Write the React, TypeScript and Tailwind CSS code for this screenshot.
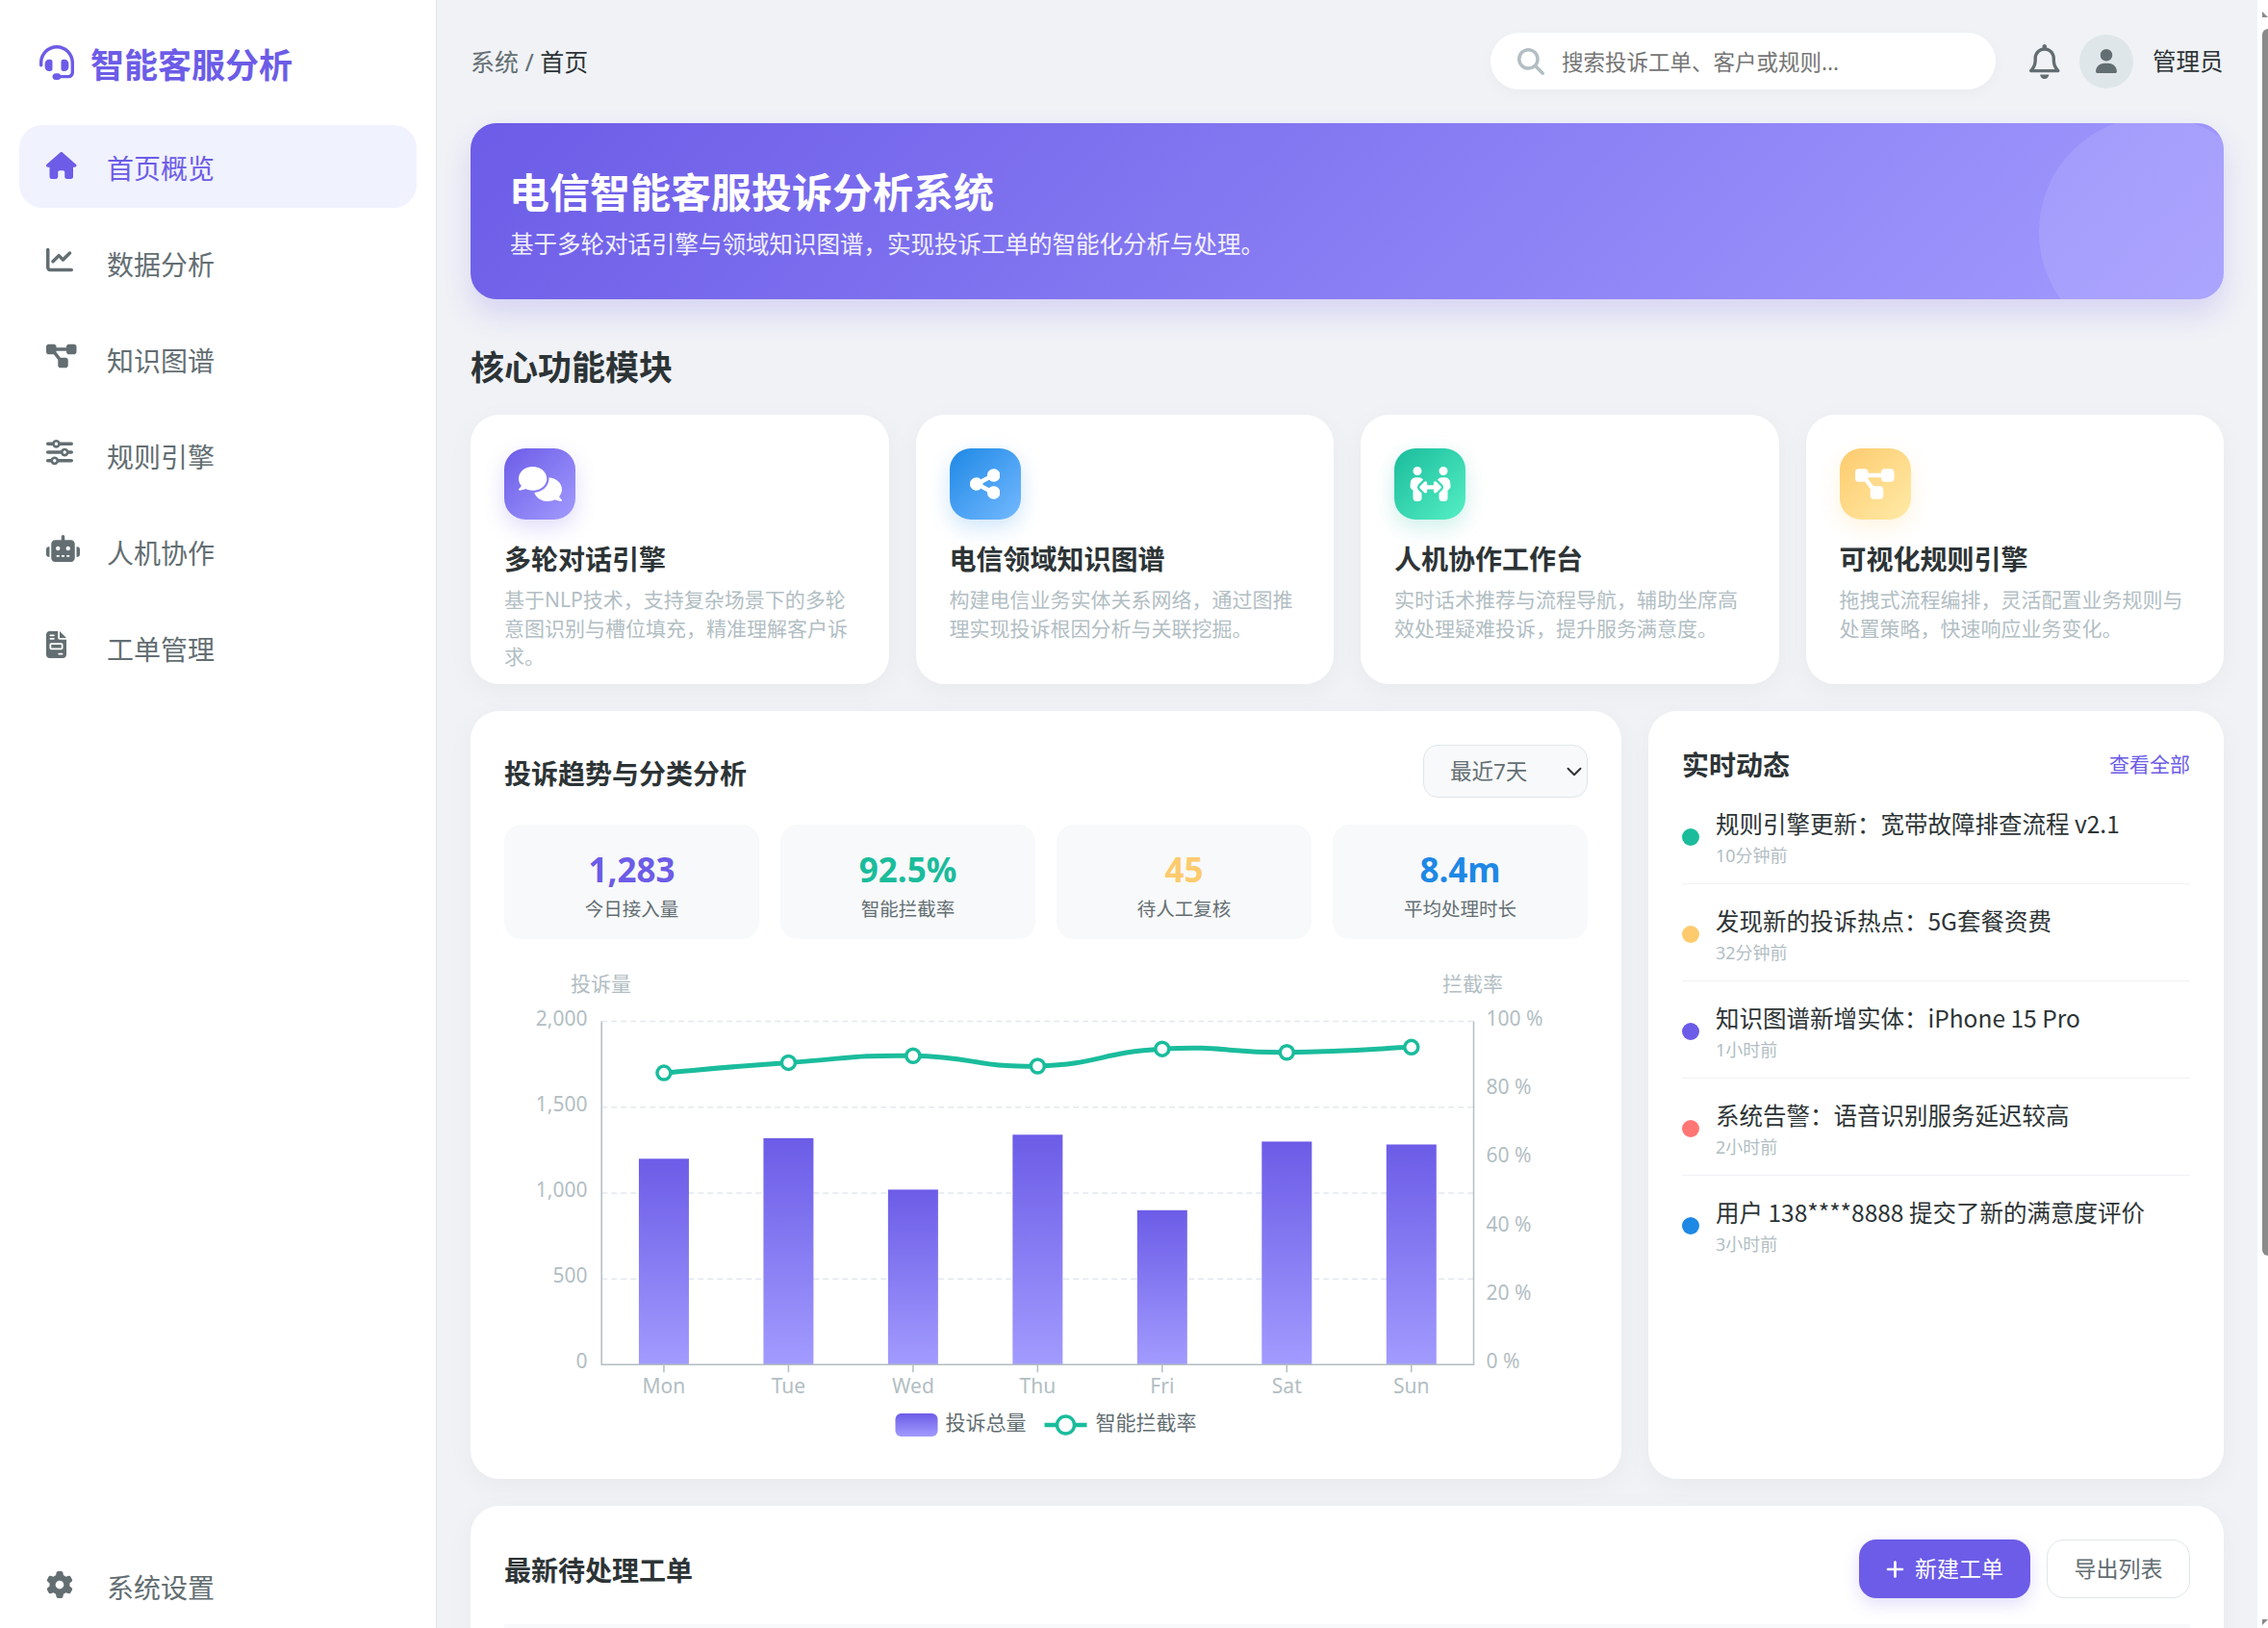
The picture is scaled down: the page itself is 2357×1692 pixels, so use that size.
import type { ReactNode } from 'react';
import { ChevronDown } from 'lucide-react';
import {
  FaChartLine,
  FaComments,
  FaDiagramProject,
  FaFileInvoice,
  FaGear,
  FaHeadset,
  FaHouse,
  FaMagnifyingGlass,
  FaPeopleArrows,
  FaPlus,
  FaRegBell,
  FaRobot,
  FaShareNodes,
  FaSliders,
  FaUser,
} from 'react-icons/fa6';

const navItems: { label: string; icon: ReactNode }[] = [
  { label: '数据分析', icon: <FaChartLine className="h-[28px] w-[28px]" /> },
  { label: '知识图谱', icon: <FaDiagramProject className="h-[28px] w-[31.5px]" /> },
  { label: '规则引擎', icon: <FaSliders className="h-[28px] w-[28px]" /> },
  { label: '人机协作', icon: <FaRobot className="h-[28px] w-[35px]" /> },
  { label: '工单管理', icon: <FaFileInvoice className="h-[28px] w-[21px]" /> },
];

const modules = [
  {
    title: '多轮对话引擎',
    desc: '基于NLP技术，支持复杂场景下的多轮意图识别与槽位填充，精准理解客户诉求。',
    icon: <FaComments className="h-[36px] w-[45px]" />,
    tone: 'bg-[linear-gradient(135deg,#6c5ce7,#a29bfe)] shadow-[0_8px_22px_rgba(108,92,231,0.22)]',
  },
  {
    title: '电信领域知识图谱',
    desc: '构建电信业务实体关系网络，通过图推理实现投诉根因分析与关联挖掘。',
    icon: <FaShareNodes className="h-[36px] w-[31.5px]" />,
    tone: 'bg-[linear-gradient(135deg,#1e88e5,#74b9ff)] shadow-[0_8px_22px_rgba(30,136,229,0.22)]',
  },
  {
    title: '人机协作工作台',
    desc: '实时话术推荐与流程导航，辅助坐席高效处理疑难投诉，提升服务满意度。',
    icon: <FaPeopleArrows className="h-[36px] w-[45px]" />,
    tone: 'bg-[linear-gradient(135deg,#1abc9c,#55efc4)] shadow-[0_8px_22px_rgba(26,188,156,0.22)]',
  },
  {
    title: '可视化规则引擎',
    desc: '拖拽式流程编排，灵活配置业务规则与处置策略，快速响应业务变化。',
    icon: <FaDiagramProject className="h-[36px] w-[40.5px]" />,
    tone: 'bg-[linear-gradient(135deg,#fdcb6e,#ffeaa7)] shadow-[0_8px_22px_rgba(253,203,110,0.22)]',
  },
];

const stats = [
  { value: '1,283', label: '今日接入量', color: 'text-[#6c5ce7]' },
  { value: '92.5%', label: '智能拦截率', color: 'text-[#1abc9c]' },
  { value: '45', label: '待人工复核', color: 'text-[#fdcb6e]' },
  { value: '8.4m', label: '平均处理时长', color: 'text-[#1e88e5]' },
];

const activities = [
  { text: '规则引擎更新：宽带故障排查流程 v2.1', time: '10分钟前', dot: 'bg-[#1abc9c]' },
  { text: '发现新的投诉热点：5G套餐资费', time: '32分钟前', dot: 'bg-[#fdcb6e]' },
  { text: '知识图谱新增实体：iPhone 15 Pro', time: '1小时前', dot: 'bg-[#6c5ce7]' },
  { text: '系统告警：语音识别服务延迟较高', time: '2小时前', dot: 'bg-[#ff7675]' },
  { text: '用户 138****8888 提交了新的满意度评价', time: '3小时前', dot: 'bg-[#1e88e5]' },
];

// chart geometry, in svg units
const plot = { left: 100.7, right: 1007, top: 61.6, bottom: 418.3 };
const days = ['Mon', 'Tue', 'Wed', 'Thu', 'Fri', 'Sat', 'Sun'];
const complaints = [1200, 1320, 1020, 1340, 900, 1300, 1283];
const interception = [85, 88, 90, 87, 92, 91, 92.5];
const plotH = plot.bottom - plot.top;
const band = (plot.right - plot.left) / days.length;
const centerX = (i: number) => plot.left + band * (i + 0.5);

function smoothPath(points: [number, number][]) {
  let d = `M${points[0][0]} ${points[0][1]}`;
  for (let i = 0; i < points.length - 1; i++) {
    const prev = points[i - 1] ?? points[i];
    const cur = points[i];
    const next = points[i + 1];
    const after = points[i + 2] ?? next;
    const c1x = cur[0] + (next[0] - prev[0]) * 0.25;
    const c1y = cur[1] + (next[1] - prev[1]) * 0.25;
    const c2x = next[0] - (after[0] - cur[0]) * 0.25;
    const c2y = next[1] - (after[1] - cur[1]) * 0.25;
    d += ` C${c1x} ${c1y} ${c2x} ${c2y} ${next[0]} ${next[1]}`;
  }
  return d;
}

function TrendChart() {
  const linePoints = interception.map(
    (v, i) => [centerX(i), plot.bottom - (v / 100) * plotH] as [number, number],
  );

  return (
    <svg viewBox="0 0 1125 500" className="mt-[24px] block h-[500px] w-full" fontSize={21}>
      <defs>
        <linearGradient id="barFill" x1="0" y1="0" x2="0" y2="1">
          <stop offset="0" stopColor="#6c5ce7" />
          <stop offset="1" stopColor="#a29bfe" />
        </linearGradient>
      </defs>

      <text x={100} y={30} fill="#b2bec3" textAnchor="middle">投诉量</text>
      <text x={1006} y={30} fill="#b2bec3" textAnchor="middle">拦截率</text>

      {[0, 1, 2, 3].map((i) => (
        <line
          key={i}
          x1={plot.left}
          x2={plot.right}
          y1={plot.top + (i * plotH) / 4}
          y2={plot.top + (i * plotH) / 4}
          stroke="#e3e8f0"
          strokeWidth={1.5}
          strokeDasharray="6 4"
        />
      ))}

      {['2,000', '1,500', '1,000', '500', '0'].map((t, i) => (
        <text key={t} x={86} y={plot.top + (i * plotH) / 4 + 4} fill="#b2bec3" textAnchor="end">
          {t}
        </text>
      ))}
      {['100 %', '80 %', '60 %', '40 %', '20 %', '0 %'].map((t, i) => (
        <text key={t} x={1020} y={plot.top + (i * plotH) / 5 + 4} fill="#b2bec3">
          {t}
        </text>
      ))}

      {complaints.map((v, i) => {
        const h = (v / 2000) * plotH;
        return (
          <rect key={days[i]} x={centerX(i) - 26} y={plot.bottom - h} width={52} height={h} fill="url(#barFill)" />
        );
      })}

      <path
        d={`M${plot.left} ${plot.top} V${plot.bottom} H${plot.right} V${plot.top}`}
        fill="none"
        stroke="#b2bec3"
        strokeWidth={1.5}
      />

      {days.map((d, i) => (
        <g key={d}>
          <line x1={centerX(i)} x2={centerX(i)} y1={plot.bottom} y2={plot.bottom + 8} stroke="#b2bec3" strokeWidth={1.5} />
          <text x={centerX(i)} y={448} fill="#b2bec3" textAnchor="middle">
            {d}
          </text>
        </g>
      ))}

      <path d={smoothPath(linePoints)} fill="none" stroke="#1abc9c" strokeWidth={5} />
      {linePoints.map(([x, y]) => (
        <circle key={x} cx={x} cy={y} r={7} fill="#fff" stroke="#1abc9c" strokeWidth={3.5} />
      ))}

      <rect x={406} y={469} width={44} height={24} rx={6} fill="url(#barFill)" />
      <text x={458} y={486} fill="#636e72">投诉总量</text>
      <line x1={561} x2={605} y1={481} y2={481} stroke="#1abc9c" strokeWidth={4.5} />
      <circle cx={583} cy={481} r={9} fill="#fff" stroke="#1abc9c" strokeWidth={3.5} />
      <text x={614} y={486} fill="#636e72">智能拦截率</text>
    </svg>
  );
}

function Sidebar() {
  return (
    <aside className="flex h-full w-[454px] shrink-0 flex-col border-r-[1.5px] border-[#dfe6e9] bg-white px-[20px]">
      <div className="flex h-[130px] items-center pl-[21px] text-[#6c5ce7]">
        <FaHeadset className="-mt-[1px] h-[36px] w-[36px]" />
        <span className="mt-[4px] ml-[17px] text-[35px] leading-none font-bold">智能客服分析</span>
      </div>

      <nav className="flex flex-1 flex-col gap-[14px]">
        <a className="flex h-[86px] items-center rounded-[24px] bg-[#f0f2fe] pl-[28px] text-[#6c5ce7]">
          <span className="-mt-[3px] w-[63px]">
            <FaHouse className="h-[28px] w-[31.5px]" />
          </span>
          <span className="mt-[3px] text-[28px]">首页概览</span>
        </a>
        {navItems.map((item) => (
          <a key={item.label} className="flex h-[86px] items-center pl-[28px] text-[#636e72]">
            <span className="-mt-[6px] w-[63px]">{item.icon}</span>
            <span className="mt-[3px] text-[28px]">{item.label}</span>
          </a>
        ))}
      </nav>

      <a className="flex h-[84px] items-center pl-[28px] text-[#636e72]">
        <span className="-mt-[6px] w-[63px]">
          <FaGear className="h-[28px] w-[28px]" />
        </span>
        <span className="text-[28px]">系统设置</span>
      </a>
    </aside>
  );
}

function Header() {
  return (
    <header className="mb-[35px] flex h-[59px] items-center justify-between">
      <div className="mt-[2px] text-[25px] text-[#636e72]">
        系统 / <span className="text-[#2d3436]">首页</span>
      </div>
      <div className="flex items-center">
        <div className="flex h-[59px] w-[525px] items-center rounded-full bg-white pl-[28px] shadow-[0_4px_15px_rgba(0,0,0,0.03)]">
          <FaMagnifyingGlass className="h-[28px] w-[28px] shrink-0 text-[#b2bec3]" />
          <input
            placeholder="搜索投诉工单、客户或规则..."
            className="mt-[2px] ml-[18px] min-w-0 flex-1 bg-transparent text-[22.5px] outline-none placeholder:text-[#757575]"
          />
        </div>
        <FaRegBell className="ml-[35px] h-[36px] w-[31.5px] text-[#636e72]" />
        <div className="ml-[20.5px] flex h-[56px] w-[56px] items-center justify-center rounded-full bg-[#dfe6e9] text-[#636e72]">
          <FaUser className="h-[25px] w-[22px]" />
        </div>
        <span className="mt-[2px] ml-[20px] w-[74px] text-[24.5px] whitespace-nowrap text-[#2d3436]">管理员</span>
      </div>
    </header>
  );
}

// the window's own scrollbar is cut off at the right edge in the screenshot
function ScrollStrip() {
  return (
    <div className="flex h-full w-[11px] shrink-0 flex-col items-start overflow-hidden bg-white">
      <div className="mt-[12px] ml-[5px] h-0 w-0 border-r-[6px] border-b-[6px] border-r-transparent border-b-[#8a8a8a]" />
      <div className="mt-[12px] ml-[5px] h-[1275px] w-[12px] shrink-0 rounded-full bg-[#8a8a8a]" />
      <div className="mt-auto mb-[3px] ml-[5px] h-0 w-0 border-t-[6px] border-r-[6px] border-t-[#8a8a8a] border-r-transparent" />
    </div>
  );
}

export default function App() {
  return (
    <div className="flex h-screen w-full overflow-hidden bg-[#f0f2f6] font-['Noto_Sans','Noto_Sans_CJK_SC',sans-serif] text-[#2d3436]">
      <Sidebar />

      <main className="h-full min-w-0 flex-1 overflow-hidden px-[35px] pt-[34px]">
        <Header />

        <section className="relative h-[183px] overflow-hidden rounded-[27px] bg-[linear-gradient(135deg,#6c5ce7,#a29bfe)] pt-[42px] pl-[41px] shadow-[0_15px_30px_rgba(108,92,231,0.2)]">
          <div className="absolute top-[-7px] right-[-48px] h-[240px] w-[240px] rounded-full bg-white/10" />
          <h1 className="-ml-[1px] text-[42px] leading-[60px] font-bold text-white">电信智能客服投诉分析系统</h1>
          <p className="mt-[6px] text-[24.5px] leading-[36px] text-white/90">
            基于多轮对话引擎与领域知识图谱，实现投诉工单的智能化分析与处理。
          </p>
        </section>

        <h2 className="mt-[45px] mb-[23px] h-[52px] text-[35px] leading-[52px] font-bold">核心功能模块</h2>

        <div className="mb-[28px] grid grid-cols-4 gap-[28px]">
          {modules.map((m) => (
            <div key={m.title} className="h-[280px] rounded-[30px] bg-white px-[35px] pt-[35px] shadow-[0_7px_30px_rgba(0,0,0,0.04)]">
              <div className={`flex h-[74px] w-[74px] items-center justify-center rounded-[22px] text-white ${m.tone}`}>
                {m.icon}
              </div>
              <h3 className="mt-[20px] text-[28px] leading-[42px] font-bold">{m.title}</h3>
              <p className="mt-[7px] text-[21px] leading-[29.5px] text-[#b2bec3]">{m.desc}</p>
            </div>
          ))}
        </div>

        <div className="mb-[28px] grid h-[798px] grid-cols-[2fr_1fr] gap-[28px]">
          <div className="min-w-0 rounded-[30px] bg-white p-[35px] shadow-[0_7px_30px_rgba(0,0,0,0.04)]">
            <div className="mb-[28px] flex items-center justify-between">
              <h3 className="mt-[5px] text-[28px] leading-[42px] font-bold">投诉趋势与分类分析</h3>
              <div className="relative flex h-[55px] w-[171px] items-center rounded-[15px] border-[1.5px] border-[#dfe6e9] bg-[#f8f9fa] pl-[27px] text-[22.5px] text-[#636e72]">
                最近7天
                <ChevronDown size={26} strokeWidth={1.8} className="absolute top-[14px] right-0 text-[#2d3436]" />
              </div>
            </div>

            <div className="grid grid-cols-4 gap-[22px]">
              {stats.map((s) => (
                <div key={s.label} className="flex h-[119px] flex-col items-center rounded-[18px] bg-[#f8f9fa] pt-[23px]">
                  <div className={`text-[35px] leading-[48px] font-bold ${s.color}`}>{s.value}</div>
                  <div className="mt-[1px] text-[19.5px] leading-[31px] text-[#636e72]">{s.label}</div>
                </div>
              ))}
            </div>

            <TrendChart />
          </div>

          <div className="min-w-0 rounded-[30px] bg-white p-[35px] shadow-[0_7px_30px_rgba(0,0,0,0.04)]">
            <div className="mb-[2px] flex items-center justify-between">
              <h3 className="text-[28px] leading-[42px] font-bold">实时动态</h3>
              <a className="text-[21px] text-[#6c5ce7]">查看全部</a>
            </div>
            {activities.map((a, i) => (
              <div
                key={a.time}
                className={`flex h-[101px] items-center gap-[17px] ${i < activities.length - 1 ? 'border-b-[1.5px] border-[#f1f2f6]' : ''}`}
              >
                <span className={`mt-[3px] h-[18px] w-[18px] shrink-0 rounded-full ${a.dot}`} />
                <div className="pt-[5px]">
                  <div className="font-['Noto_Sans_CJK_SC',sans-serif] text-[24.5px] leading-[36px] whitespace-nowrap text-[#2d3436]">
                    {a.text}
                  </div>
                  <div className="text-[18px] leading-[30px] text-[#b2bec3]">{a.time}</div>
                </div>
              </div>
            ))}
          </div>
        </div>

        <div className="h-[400px] rounded-[30px] bg-white px-[35px] pt-[35px] shadow-[0_7px_30px_rgba(0,0,0,0.04)]">
          <div className="flex h-[61px] items-center justify-between">
            <h3 className="mt-[3px] text-[28px] font-bold">最新待处理工单</h3>
            <div className="flex items-center gap-[17px]">
              <button className="flex h-[61px] w-[178px] items-center justify-center gap-[11px] rounded-[18px] bg-[#6c5ce7] text-[23px] text-white shadow-[0_6px_18px_rgba(108,92,231,0.2)]">
                <FaPlus className="h-[22px] w-[19px]" />
                新建工单
              </button>
              <button className="h-[61px] w-[149px] rounded-[18px] border-[1.5px] border-[#dfe6e9] bg-white text-[23px] text-[#636e72]">
                导出列表
              </button>
            </div>
          </div>
          <div className="mt-[27px] h-[60px] bg-[#f8f9fa]" />
        </div>
      </main>

      <ScrollStrip />
    </div>
  );
}
